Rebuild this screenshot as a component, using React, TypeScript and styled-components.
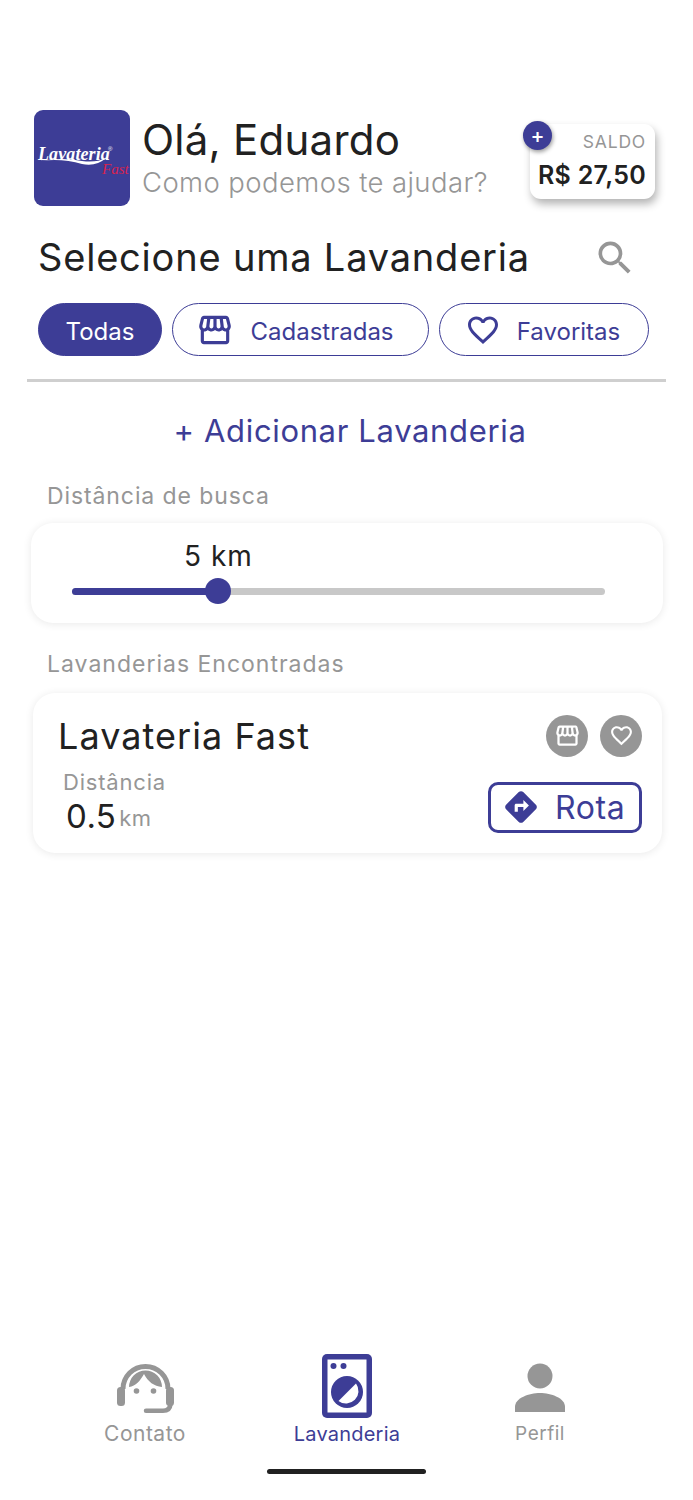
import React from "react";
import styled, { createGlobalStyle } from "styled-components";
import { MdOutlineStorefront, MdFavoriteBorder, MdSearch, MdDirections } from "react-icons/md";

const INDIGO = "#3d3d96";
const GREY = "#969696";
const INK = "#212121";

const Global = createGlobalStyle`
  html, body { margin: 0; padding: 0; background: #fff; }
  * { box-sizing: border-box; }
  body { font-family: Inter, "Noto Sans", sans-serif; color: ${INK}; }
`;

const Page = styled.div`
  width: 693px; height: 1500px; display: flex; flex-direction: column; background: #fff; overflow: hidden;
`;
const Header = styled.header`
  display: flex; align-items: center; padding: 110px 38px 0 34px; height: 206px;
`;
const Logo = styled.div`
  width: 96px; height: 96px; border-radius: 9px; background: ${INDIGO}; flex: none; position: relative; overflow: hidden;
`;
const LogoWord = styled.span`
  position: absolute; left: 4px; top: 34px; color: #fff; font: italic bold 18px "Liberation Serif", serif; letter-spacing: 0.1px;
`;
const LogoReg = styled.span`
  position: absolute; left: 74px; top: 36px; color: #fff; font: 6px "Liberation Sans", sans-serif;
`;
const LogoFast = styled.span`
  position: absolute; left: 68px; top: 51px; color: #d8234f; font: italic 15px "Liberation Serif", serif;
`;
const LogoSwoosh = styled.svg`
  position: absolute; left: 0; top: 0;
`;
const Greeting = styled.div`
  margin-left: 12px; display: flex; flex-direction: column; flex: 1; padding-bottom: 3px;
`;
const Hello = styled.div`
  font-size: 42px; line-height: 50px; font-weight: 400; letter-spacing: 0.25px; color: ${INK};
`;
const Help = styled.div`
  font-size: 27.5px; line-height: 34px; font-weight: 300; color: ${GREY}; letter-spacing: 0.4px; white-space: nowrap;
`;
const Balance = styled.div`
  width: 125px; height: 75px; border-radius: 11px; background: #fff; position: relative; flex: none; margin-top: 6px;
  box-shadow: 2px 5px 9px rgba(0,0,0,.3); display: flex; flex-direction: column; align-items: flex-end; padding: 8px 9px 0 0;
`;
const BalanceLabel = styled.div`
  font-size: 17.5px; line-height: 20px; color: ${GREY}; letter-spacing: 0.8px;
`;
const BalanceValue = styled.div`
  font-size: 25px; line-height: 30px; margin-top: 8px; font-weight: 600; color: ${INK}; white-space: nowrap; letter-spacing: 0.3px;
`;
const AddBadge = styled.div`
  position: absolute; left: -7px; top: -3px; width: 29px; height: 29px; border-radius: 50%; background: ${INDIGO};
  color: #fff; display: flex; align-items: center; justify-content: center; box-shadow: 1px 2px 4px rgba(0,0,0,.4);
  font-size: 21px; font-weight: 500; line-height: 1;
`;
const TitleRow = styled.div`
  display: flex; align-items: center; justify-content: space-between; padding: 28px 56px 0 38px; height: 74px;
`;
const Title = styled.h1`
  margin: 0; font-size: 38px; line-height: 46px; font-weight: 400; color: ${INK}; letter-spacing: 0.8px; white-space: nowrap;
`;
const SearchBtn = styled.div`
  color: ${GREY}; display: flex; padding-top: 1px;
`;
const Chips = styled.div`
  display: flex; gap: 10px; padding: 23px 0 0 38px;
`;
const Chip = styled.div<{ $w: number; $active?: boolean; $shift?: number }>`
  width: ${p => p.$w}px; height: 53px; border-radius: 27px; border: 1.5px solid ${INDIGO};
  background: ${p => (p.$active ? INDIGO : "#fff")}; color: ${p => (p.$active ? "#fff" : INDIGO)};
  display: flex; align-items: center; justify-content: center; gap: 16px; padding-right: ${p => p.$shift ?? 0}px;
  font-size: 24px; font-weight: 400;
`;
const ChipText = styled.span`
  padding-top: 4px;
`;
const Divider = styled.div`
  height: 2.5px; background: #cfcfcf; margin: 23px 27px 0 27px;
`;
const AddLink = styled.div`
  text-align: center; font-size: 31px; line-height: 38px; color: ${INDIGO}; padding: 30px 0 0 7px; letter-spacing: 0.65px;
`;
const SectionLabel = styled.div<{ $top: number }>`
  font-size: 23px; line-height: 28px; color: ${GREY}; padding: ${p => p.$top}px 0 0 47px; letter-spacing: ${p => (p.$top > 30 ? 0.9 : 1)}px;
`;
const SliderCard = styled.section`
  height: 100px; margin: 13px 30px 0 31px; border-radius: 22px; background: #fff;
  box-shadow: 0 1px 8px rgba(0,0,0,.09); padding: 16px 58px 0 41px; display: flex; flex-direction: column;
`;
const SliderValue = styled.div`
  font-size: 28px; line-height: 34px; color: ${INK}; padding-left: 112px; letter-spacing: 1px;
`;
const Track = styled.div`
  height: 7px; margin-top: 15px; border-radius: 4px; background: #c8c8c8; position: relative;
`;
const TrackFill = styled.div`
  height: 7px; border-radius: 4px; background: ${INDIGO};
`;
const Thumb = styled.div`
  position: absolute; top: -10px; width: 26px; height: 26px; margin-left: -13px; border-radius: 50%; background: ${INDIGO};
`;
const ResultCard = styled.section`
  height: 160px; margin: 15px 31px 0 33px; border-radius: 22px; background: #fff;
  box-shadow: 0 1px 8px rgba(0,0,0,.09); padding: 22px 20px 0 25px; display: flex; flex-direction: column;
`;
const ResultTop = styled.div`
  display: flex; align-items: center; justify-content: space-between; height: 42px;
`;
const ResultName = styled.div`
  font-size: 36px; line-height: 42px; color: ${INK}; letter-spacing: 1.05px;
`;
const RoundIcons = styled.div`
  display: flex; gap: 12px;
`;
const RoundIcon = styled.div`
  width: 42px; height: 42px; border-radius: 50%; background: ${GREY}; color: #fff; display: flex; align-items: center; justify-content: center;
`;
const ResultBottom = styled.div`
  display: flex; justify-content: space-between; align-items: flex-start; margin-top: 4px;
`;
const Distance = styled.div`
  padding: 8px 0 0 5px; display: flex; flex-direction: column;
`;
const DistanceLabel = styled.div`
  font-size: 22px; line-height: 26px; color: ${GREY}; letter-spacing: 0.8px;
`;
const DistanceValue = styled.div`
  display: flex; align-items: baseline; padding-left: 3px; font-size: 33px; line-height: 42px; color: ${INK}; letter-spacing: 0.4px;
`;
const DistanceUnit = styled.span`
  font-size: 22px; color: ${GREY}; margin-left: 3px; align-self: center; margin-top: 2px;
`;
const RouteBtn = styled.div`
  width: 154px; height: 51px; margin-top: 21px; border: 3px solid ${INDIGO}; border-radius: 10px; color: ${INDIGO};
  display: flex; align-items: center; gap: 15px; padding-left: 11px; font-size: 32px; letter-spacing: 0.6px;
`;
const TabBar = styled.nav`
  margin-top: auto; display: grid; grid-template-columns: 160px 244px 142px; padding: 0 0 22px 65px;
`;
const Tab = styled.div<{ $active?: boolean; $size: number }>`
  display: flex; flex-direction: column; align-items: center; justify-content: flex-end;
  color: ${p => (p.$active ? INDIGO : GREY)}; font-size: ${p => p.$size}px; line-height: 26px;
  letter-spacing: ${p => (p.$active ? 0.2 : 0.5)}px;
`;
const TabLabel = styled.span<{ $gap: number }>`
  margin-top: ${p => p.$gap}px;
`;
const HomeArea = styled.div`
  height: 31px; display: flex; justify-content: center;
`;
const HomeBar = styled.div`
  width: 159px; height: 5px; border-radius: 3px; background: ${INK};
`;

const Headset = () => (
  <svg width="57" height="51" viewBox="0 0 57 51" fill="none">
    <path d="M6 26A22.500 22.500 0 0 1 51 26" stroke={GREY} strokeWidth="5" />
    <rect x="0" y="24" width="8" height="19" rx="3.500" fill={GREY} />
    <rect x="49" y="24" width="8" height="19" rx="3.500" fill={GREY} />
    <path d="M53.500 41Q53 47.800 46 47.800H29" stroke={GREY} strokeWidth="4.500" strokeLinecap="round" />
    <path d="M12 24A16.500 16.500 0 0 1 45 24C37 23 31 19 27 11C23 18 19 23 12 24z" fill={GREY} />
    <circle cx="19.500" cy="28" r="2.800" fill={GREY} />
    <circle cx="36.500" cy="28" r="2.800" fill={GREY} />
  </svg>
);

const Washer = () => (
  <svg width="50" height="64" viewBox="0 0 50 64">
    <rect x="0" y="0" width="50" height="64" rx="5" fill={INDIGO}/>
    <rect x="5.500" y="5.500" width="39" height="53" fill="#fff"/>
    <circle cx="11.500" cy="12" r="3" fill={INDIGO}/>
    <circle cx="21.500" cy="12" r="3" fill={INDIGO}/>
    <circle cx="25" cy="38" r="16" fill={INDIGO}/>
    <path d="M16.500 47A12.500 12.500 0 0 0 34 29.500z" fill="#fff"/>
  </svg>
);

const Person = () => (
  <svg width="50" height="50" viewBox="0 0 50 50">
    <circle cx="25" cy="13" r="12.500" fill={GREY}/>
    <path d="M0 49v-5c0-9 14-14 25-14s25 5 25 14v5z" fill={GREY}/>
  </svg>
);

export default function App() {
  return (
    <Page>
      <Global />
      <Header>
        <Logo>
          <LogoSwoosh width="96" height="96" viewBox="0 0 96 96">
            <path d="M6 51Q28 48 48 54Q62 57 72 48Q62 53 48 51Q28 47 6 51z" fill="#fff" />
          </LogoSwoosh>
          <LogoWord>Lavateria</LogoWord>
          <LogoReg>®</LogoReg>
          <LogoFast>Fast</LogoFast>
        </Logo>
        <Greeting>
          <Hello>Olá, Eduardo</Hello>
          <Help>Como podemos te ajudar?</Help>
        </Greeting>
        <Balance>
          <AddBadge>+</AddBadge>
          <BalanceLabel>SALDO</BalanceLabel>
          <BalanceValue>R$ 27,50</BalanceValue>
        </Balance>
      </Header>
      <TitleRow>
        <Title>Selecione uma Lavanderia</Title>
        <SearchBtn><MdSearch size={44} /></SearchBtn>
      </TitleRow>
      <Chips>
        <Chip $w={124} $active><ChipText>Todas</ChipText></Chip>
        <Chip $w={257} $shift={11}><MdOutlineStorefront size={38} /><ChipText>Cadastradas</ChipText></Chip>
        <Chip $w={210} $shift={3}><MdFavoriteBorder size={36} /><ChipText>Favoritas</ChipText></Chip>
      </Chips>
      <Divider />
      <AddLink>+ Adicionar Lavanderia</AddLink>
      <SectionLabel $top={32}>Distância de busca</SectionLabel>
      <SliderCard>
        <SliderValue>5 km</SliderValue>
        <Track>
          <TrackFill style={{ width: "27.4%" }} />
          <Thumb style={{ left: "27.4%" }} />
        </Track>
      </SliderCard>
      <SectionLabel $top={27}>Lavanderias Encontradas</SectionLabel>
      <ResultCard>
        <ResultTop>
          <ResultName>Lavateria Fast</ResultName>
          <RoundIcons>
            <RoundIcon><MdOutlineStorefront size={27} /></RoundIcon>
            <RoundIcon><MdFavoriteBorder size={25} /></RoundIcon>
          </RoundIcons>
        </ResultTop>
        <ResultBottom>
          <Distance>
            <DistanceLabel>Distância</DistanceLabel>
            <DistanceValue>0.5<DistanceUnit>km</DistanceUnit></DistanceValue>
          </Distance>
          <RouteBtn><MdDirections size={38} />Rota</RouteBtn>
        </ResultBottom>
      </ResultCard>
      <TabBar>
        <Tab $size={21}><Headset /><TabLabel $gap={7}>Contato</TabLabel></Tab>
        <Tab $size={20} $active><Washer /><TabLabel $gap={3}>Lavanderia</TabLabel></Tab>
        <Tab $size={19}><Person /><TabLabel $gap={8}>Perfil</TabLabel></Tab>
      </TabBar>
      <HomeArea><HomeBar /></HomeArea>
    </Page>
  );
}
